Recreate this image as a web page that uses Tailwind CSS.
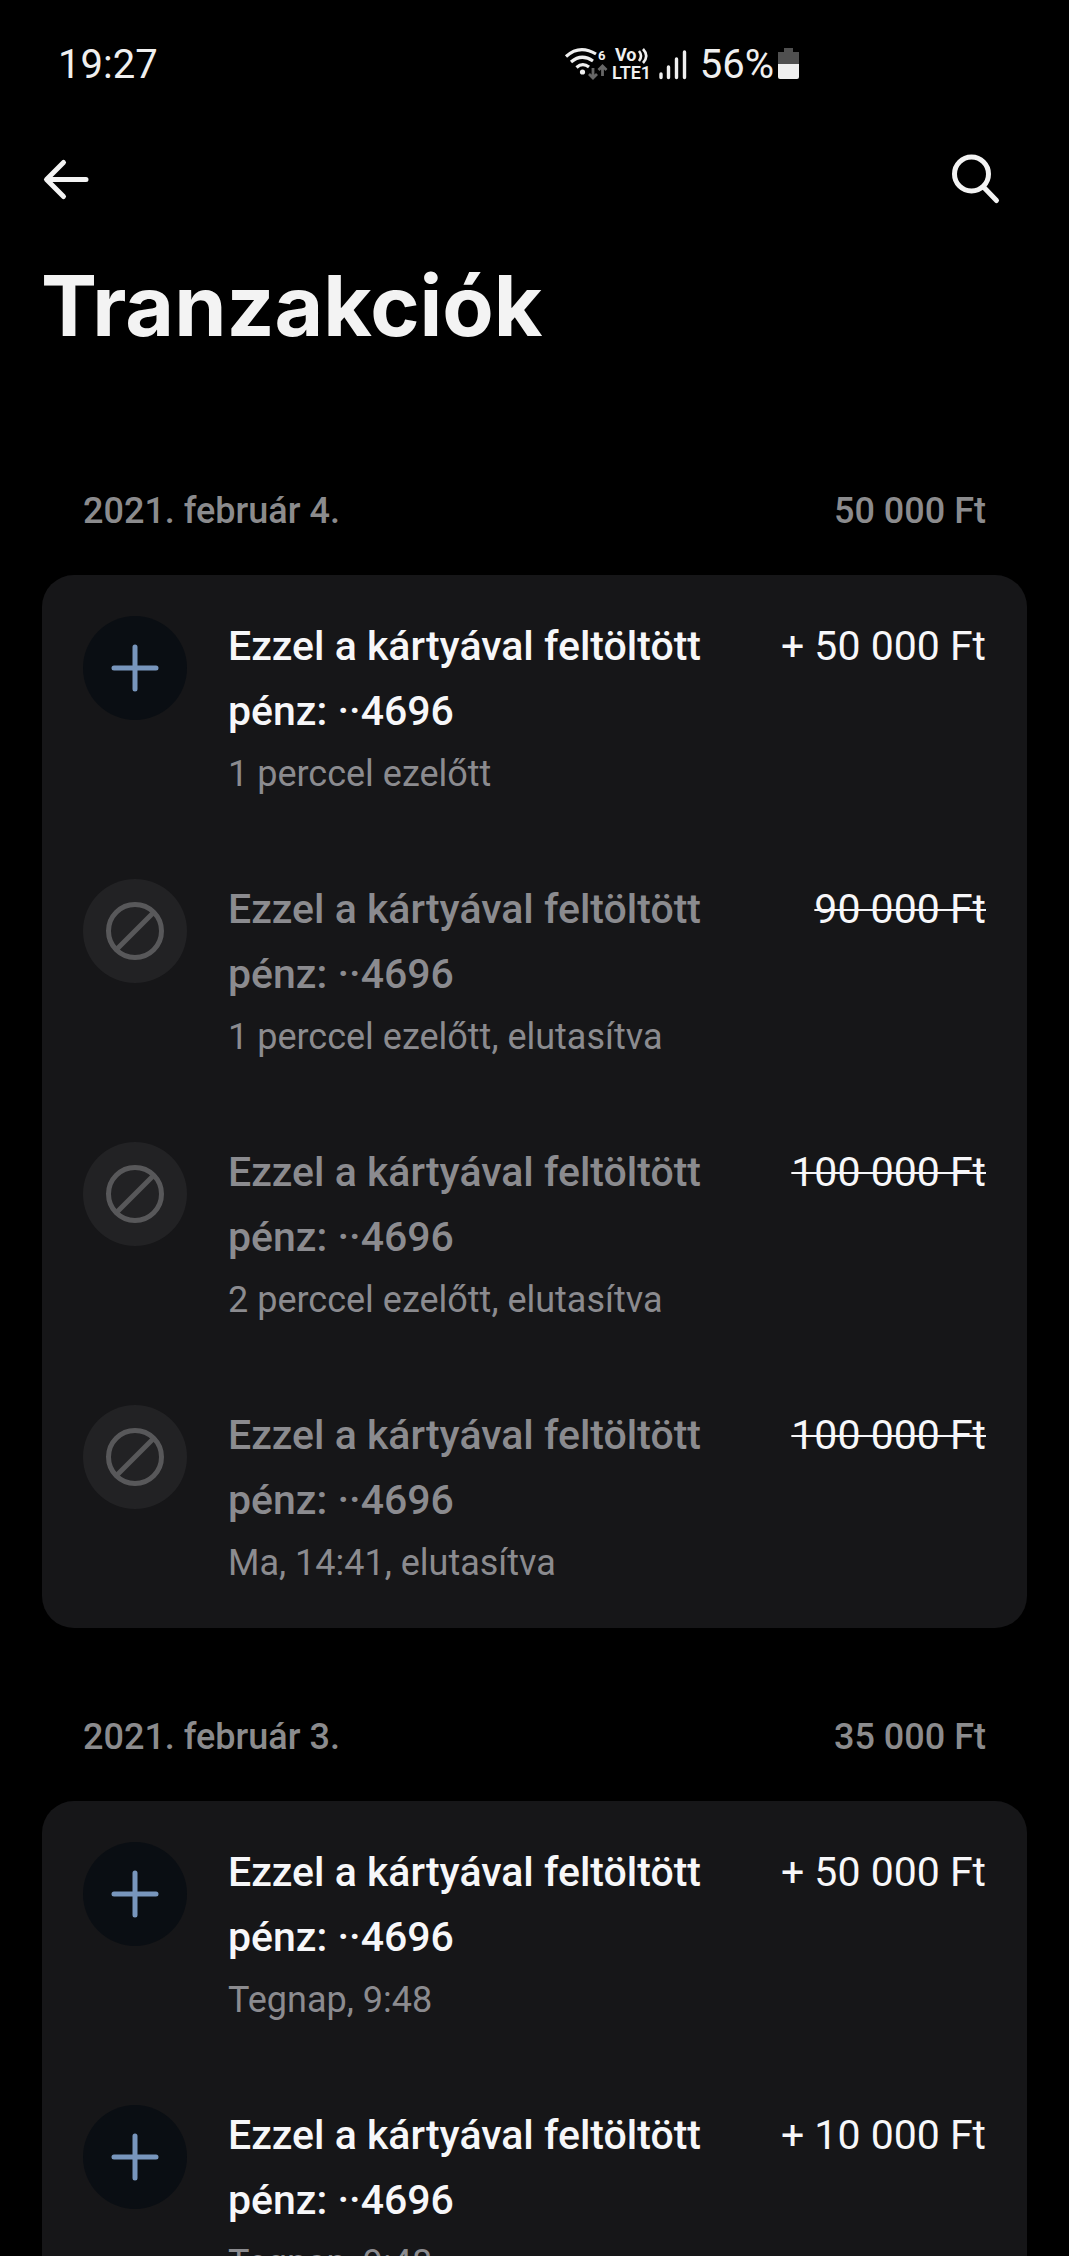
<!DOCTYPE html>
<html lang="hu">
<head>
    <meta charset="UTF-8">
    <meta name="viewport" content="width=device-width, initial-scale=1.0">
    <title>Tranzakciók</title>
    <script src="https://cdn.jsdelivr.net/npm/@tailwindcss/browser@4"></script>
</head>
<body class="h-screen overflow-hidden bg-black font-[Roboto,sans-serif] text-[#f7f7f9]">

<!-- Shared icons -->
<svg class="hidden" aria-hidden="true">
    <symbol id="icon-plus" viewBox="0 0 104 104">
        <path d="M52 31v42M31 52h42" fill="none" stroke="#7896bd" stroke-width="5" stroke-linecap="round"/>
    </symbol>
    <symbol id="icon-declined" viewBox="0 0 104 104">
        <circle cx="52" cy="52" r="26.5" fill="none" stroke="#58585a" stroke-width="5"/>
        <path d="M34 70l36-36" fill="none" stroke="#58585a" stroke-width="5"/>
    </symbol>
</svg>

<!-- Status bar -->
<div class="flex h-[130px] items-center justify-between pl-[58px] pr-[270px] text-[40px] leading-none text-[#efefef]">
    <span>19:27</span>
    <div class="flex items-center">
        <svg class="h-[36px] w-[124px]" viewBox="0 0 124 36" aria-hidden="true">
            <g fill="none" stroke="#efefef" stroke-width="3.2">
                <path d="M2 9.500Q15.500-3 32 7"/>
                <path d="M7 15Q17.500 6 29 14"/>
                <path d="M12.500 20.500Q18.500 15 25 20"/>
            </g>
            <circle cx="18.500" cy="25" r="2.600" fill="#efefef"/>
            <text x="34" y="13" font-family="Roboto" font-size="13" font-weight="700" fill="#efefef">6</text>
            <g fill="none" stroke="#666" stroke-width="2.800">
                <path d="M29 21v10M25 27l4 4 4-4"/>
                <path d="M38.500 29v-10M34.500 23l4-4 4 4"/>
            </g>
            <text x="51" y="14" font-family="Roboto" font-size="18" font-weight="700" fill="#efefef">Vo</text>
            <path d="M75 4q4 5 0 10M79 2q6.500 7 0 14" fill="none" stroke="#efefef" stroke-width="2.600"/>
            <text x="48" y="32" font-family="Roboto" font-size="18" font-weight="600" fill="#efefef">LTE1</text>
            <path d="M97 27v3.500M104.500 20v10.500M112.500 12v18.500M120.500 5v25.500" fill="none" stroke="#efefef" stroke-width="3.400" stroke-linecap="round"/>
        </svg>
        <span class="ml-3">56%</span>
        <svg class="ml-1 h-[36px] w-[21px]" viewBox="0 0 21 36" aria-hidden="true">
            <path d="M6 1h9v4h6v12H0V5h6z" fill="#505050"/>
            <path d="M0 17h21v13q0 2-2 2H2q-2 0-2-2z" fill="#efefef"/>
        </svg>
    </div>
</div>

<!-- Top navigation -->
<header>
    <div class="flex h-[100px] items-center justify-between pl-[42px] pr-[68px]">
        <button type="button" aria-label="Vissza">
            <svg class="h-12 w-12" viewBox="0 0 48 48" fill="none" stroke="#f3f3f3" stroke-width="5" stroke-linecap="round" stroke-linejoin="round">
                <path d="M44 23.500H5M21.500 6.500L4.500 23.500L21.500 40.500"/>
            </svg>
        </button>
        <button type="button" aria-label="Keresés">
            <svg class="h-[52px] w-[52px]" viewBox="0 0 52 52" fill="none" stroke="#f3f3f3" stroke-width="5" stroke-linecap="round">
                <circle cx="22.500" cy="20" r="17"/>
                <path d="M34.500 33l13 13.500"/>
            </svg>
        </button>
    </div>
    <h1 class="mt-6 mb-[44px] pl-[41px] font-[Inter,sans-serif] text-[84px] leading-[104px] font-bold text-[#f3f3f3]">Tranzakciók</h1>
</header>

<!-- Transactions -->
<main class="px-[42px]">
    <section>
        <div class="flex justify-between px-[41px] pt-[87px] pb-[42px] text-[36px] leading-[44px] font-medium text-[#8b8b8d]">
            <h2>2021. február 4.</h2>
            <span>50 000 Ft</span>
        </div>
        <ul class="flex flex-col rounded-[32px] bg-[#161618] pb-px">
            <li class="flex gap-[41px] px-[41px] pt-[39px] pb-[34px]">
                <svg class="mt-0.5 h-[104px] w-[104px] shrink-0 rounded-full bg-[#0a0e13]"><use href="#icon-plus"/></svg>
                <div class="flex-1">
                    <h3 class="text-[41px] leading-[65px] font-medium">Ezzel a kártyával feltöltött pénz: ··4696</h3>
                    <p class="text-[36px] leading-[60px] text-[#8b8b8f]">1 perccel ezelőtt</p>
                </div>
                <span class="text-[41px] leading-[65px] whitespace-nowrap">+ 50 000 Ft</span>
            </li>
            <li class="flex gap-[41px] px-[41px] pt-[39px] pb-[34px]">
                <svg class="mt-0.5 h-[104px] w-[104px] shrink-0 rounded-full bg-[#222224]"><use href="#icon-declined"/></svg>
                <div class="flex-1 text-[#8b8b8f]">
                    <h3 class="text-[41px] leading-[65px] font-medium">Ezzel a kártyával feltöltött pénz: ··4696</h3>
                    <p class="text-[36px] leading-[60px]">1 perccel ezelőtt, elutasítva</p>
                </div>
                <s class="text-[41px] leading-[65px] whitespace-nowrap decoration-2">90 000 Ft</s>
            </li>
            <li class="flex gap-[41px] px-[41px] pt-[39px] pb-[34px]">
                <svg class="mt-0.5 h-[104px] w-[104px] shrink-0 rounded-full bg-[#222224]"><use href="#icon-declined"/></svg>
                <div class="flex-1 text-[#8b8b8f]">
                    <h3 class="text-[41px] leading-[65px] font-medium">Ezzel a kártyával feltöltött pénz: ··4696</h3>
                    <p class="text-[36px] leading-[60px]">2 perccel ezelőtt, elutasítva</p>
                </div>
                <s class="text-[41px] leading-[65px] whitespace-nowrap decoration-2">100 000 Ft</s>
            </li>
            <li class="flex gap-[41px] px-[41px] pt-[39px] pb-[34px]">
                <svg class="mt-0.5 h-[104px] w-[104px] shrink-0 rounded-full bg-[#222224]"><use href="#icon-declined"/></svg>
                <div class="flex-1 text-[#8b8b8f]">
                    <h3 class="text-[41px] leading-[65px] font-medium">Ezzel a kártyával feltöltött pénz: ··4696</h3>
                    <p class="text-[36px] leading-[60px]">Ma, 14:41, elutasítva</p>
                </div>
                <s class="text-[41px] leading-[65px] whitespace-nowrap decoration-2">100 000 Ft</s>
            </li>
        </ul>
    </section>

    <section>
        <div class="flex justify-between px-[41px] pt-[87px] pb-[42px] text-[36px] leading-[44px] font-medium text-[#8b8b8d]">
            <h2>2021. február 3.</h2>
            <span>35 000 Ft</span>
        </div>
        <ul class="flex flex-col rounded-[32px] bg-[#161618] pb-px">
            <li class="flex gap-[41px] px-[41px] pt-[39px] pb-[34px]">
                <svg class="mt-0.5 h-[104px] w-[104px] shrink-0 rounded-full bg-[#0a0e13]"><use href="#icon-plus"/></svg>
                <div class="flex-1">
                    <h3 class="text-[41px] leading-[65px] font-medium">Ezzel a kártyával feltöltött pénz: ··4696</h3>
                    <p class="text-[36px] leading-[60px] text-[#8b8b8f]">Tegnap, 9:48</p>
                </div>
                <span class="text-[41px] leading-[65px] whitespace-nowrap">+ 50 000 Ft</span>
            </li>
            <li class="flex gap-[41px] px-[41px] pt-[39px] pb-[34px]">
                <svg class="mt-0.5 h-[104px] w-[104px] shrink-0 rounded-full bg-[#0a0e13]"><use href="#icon-plus"/></svg>
                <div class="flex-1">
                    <h3 class="text-[41px] leading-[65px] font-medium">Ezzel a kártyával feltöltött pénz: ··4696</h3>
                    <p class="text-[36px] leading-[60px] text-[#8b8b8f]">Tegnap, 9:48</p>
                </div>
                <span class="text-[41px] leading-[65px] whitespace-nowrap">+ 10 000 Ft</span>
            </li>
        </ul>
    </section>
</main>

</body>
</html>
